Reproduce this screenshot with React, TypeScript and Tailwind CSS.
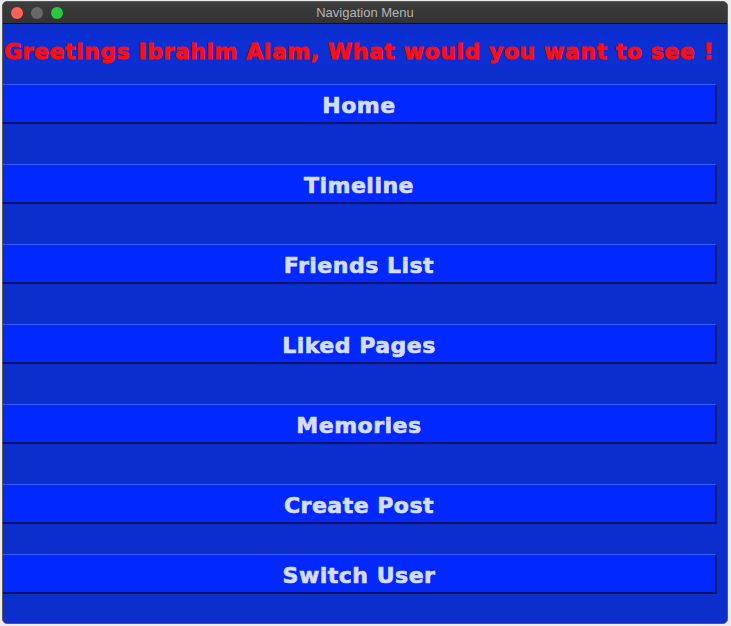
const items = ['Home', 'Timeline', 'Friends List', 'Liked Pages', 'Memories', 'Create Post', 'Switch User']

function NavButton({ label, last }: { label: string; last?: boolean }) {
  return (
    <div className={last ? 'mt-[30px]' : 'mt-[40px] first:mt-0'}>
      <button className="flex h-[40px] w-[714px] items-center justify-center border-t border-t-[#3a5cff] border-r-2 border-r-[#0a1a6e] border-b-2 border-b-[#0a1460] bg-[#0028ff] pt-[3px] text-[22px] font-bold tracking-[0.5px] text-[#d4dcff] [font-family:'DejaVu_Sans',sans-serif] [-webkit-text-stroke:0.7px_#d4dcff]">
        {label}
      </button>
    </div>
  )
}

export default function App() {
  return (
    <div className="h-[626px] w-[731px] bg-[#ececec] pl-[2px] pt-[1px]">
      <div className="flex h-[623px] w-[726px] flex-col overflow-hidden rounded-[5px] border border-[#5a5a5a] bg-[#0c2ecc]">
        <div className="relative flex h-[22px] shrink-0 items-center border-b border-b-[#111] bg-gradient-to-b from-[#3d3d3d] to-[#333] px-[8px]">
          <div className="flex gap-[8px]">
            <span className="h-[12px] w-[12px] rounded-full bg-[#fe5f57]" />
            <span className="h-[12px] w-[12px] rounded-full bg-[#686868]" />
            <span className="h-[12px] w-[12px] rounded-full bg-[#28c840]" />
          </div>
          <span className="absolute inset-x-0 text-center text-[13px] text-[#b4b4b4] [font-family:'Liberation_Sans',Arial,sans-serif]">
            Navigation Menu
          </span>
        </div>
        <div className="mt-[10px] flex h-[32px] w-[712px] items-center bg-[#0b2fd2] pt-[3px]">
          <span className="whitespace-nowrap pl-[1px] text-[22px] font-bold tracking-[0.55px] text-[#ff0d0d] [font-family:'DejaVu_Sans',sans-serif] [-webkit-text-stroke:0.8px_#ff0d0d]">
            Greetings Ibrahim Alam, What would you want to see !
          </span>
        </div>
        <div className="mt-[18px] flex flex-col">
          {items.map((item, i) => (
            <NavButton key={item} label={item} last={i === items.length - 1} />
          ))}
        </div>
      </div>
    </div>
  )
}
